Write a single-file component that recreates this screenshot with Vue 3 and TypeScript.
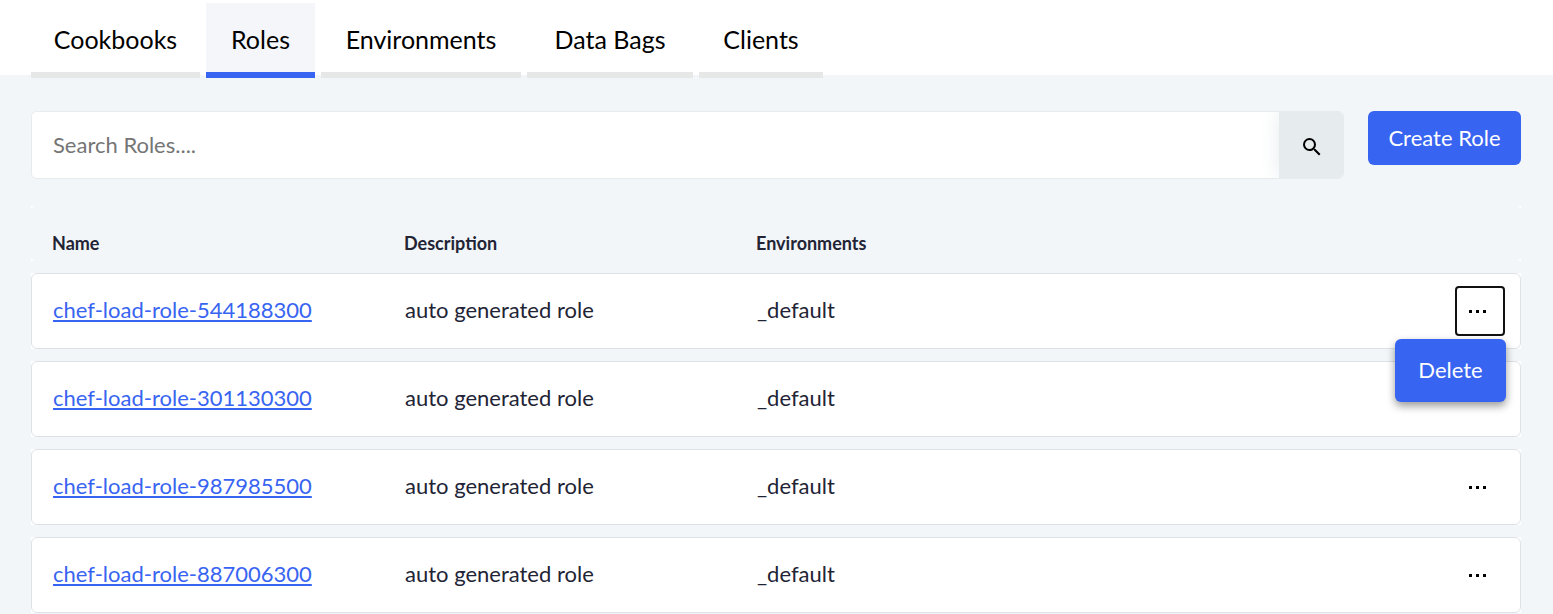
<script setup lang="ts">
import { ref } from 'vue'

interface Role {
  name: string
  description: string
  environments: string
}

const tabs: string[] = ['Cookbooks', 'Roles', 'Environments', 'Data Bags', 'Clients']
const activeTab = ref('Roles')
const search = ref('')
const openMenu = ref<string | null>('chef-load-role-544188300')

const roles: Role[] = ['544188300', '301130300', '987985500', '887006300'].map((id) => ({
  name: `chef-load-role-${id}`,
  description: 'auto generated role',
  environments: '_default',
}))

function toggleMenu(name: string): void {
  openMenu.value = openMenu.value === name ? null : name
}
</script>

<template>
  <div class="page">
    <nav class="tabs" aria-label="Sections">
      <a
        v-for="tab in tabs"
        :key="tab"
        href="#"
        class="tab"
        :class="{ active: tab === activeTab }"
        @click.prevent="activeTab = tab"
      >{{ tab }}</a>
    </nav>

    <main class="content">
      <div class="toolbar">
        <form class="search" role="search" @submit.prevent>
          <input v-model="search" class="search-input" type="text" aria-label="Search roles" placeholder="Search Roles...." />
          <button class="search-button" type="submit" aria-label="Search">
            <svg width="24" height="24" viewBox="0 0 24 24" aria-hidden="true">
              <path d="M15.5 14h-.79l-.28-.27A6.47 6.47 0 0 0 16 9.5 6.5 6.5 0 1 0 9.5 16c1.61 0 3.09-.59 4.23-1.57l.27.28v.79l5 4.99L20.49 19l-4.99-5zm-6 0C7.01 14 5 11.99 5 9.5S7.01 5 9.5 5 14 7.01 14 9.5 11.99 14 9.5 14z" />
            </svg>
          </button>
        </form>
        <button class="primary" type="button">Create Role</button>
      </div>

      <table class="roles">
        <colgroup>
          <col />
          <col />
          <col />
          <col />
          <col class="actions-col" />
        </colgroup>
        <thead>
          <tr>
            <th scope="col">Name</th>
            <th scope="col">Description</th>
            <th scope="col" colspan="2">Environments</th>
            <td></td>
          </tr>
        </thead>
        <tbody>
          <tr v-for="role in roles" :key="role.name">
            <td><a class="role-link" href="#">{{ role.name }}</a></td>
            <td>{{ role.description }}</td>
            <td colspan="2">{{ role.environments }}</td>
            <td class="actions">
              <div class="menu">
                <button
                  class="menu-button"
                  :class="{ open: openMenu === role.name }"
                  type="button"
                  :aria-label="`Actions for ${role.name}`"
                  :aria-expanded="openMenu === role.name"
                  @click="toggleMenu(role.name)"
                >
                  <svg width="18" height="4" viewBox="0 0 18 4" aria-hidden="true">
                    <path d="M0 1h3v3H0zM7 1h3v3H7zM14 1h3v3h-3z" />
                  </svg>
                </button>
                <button v-if="openMenu === role.name" class="menu-item" type="button">Delete</button>
              </div>
            </td>
          </tr>
        </tbody>
      </table>
    </main>
  </div>
</template>

<style>
html {
  background: #f2f6f9;
}

body {
  overflow-x: hidden;
}
</style>

<style scoped>
.page,
.page * {
  box-sizing: border-box;
}

.page {
  color: #222435;
  font-family: Muli, Lato, "Open Sans", sans-serif;
  font-size: 22px;
  line-height: 28px;
}

button,
input {
  font: inherit;
}

.tabs {
  display: grid;
  grid-template-columns: 169px 109px 200px 166px 124px;
  gap: 6px;
  height: 75px;
  padding: 3px 32px 0 31px;
  background: #fff;
}

.tab {
  height: 75px;
  padding: 21px 0 0;
  border-bottom: 6px solid #e6e8e8;
  color: #000;
  font-size: 25px;
  line-height: 30px;
  text-align: center;
  text-decoration: none;
  white-space: nowrap;
}

.tab.active {
  background: #f4f6f9;
  border-bottom-color: #3864f2;
}

.content {
  padding: 36px 32px 0 31px;
}

.toolbar {
  display: flex;
  align-items: flex-start;
  gap: 24px;
}

.search {
  display: flex;
  flex: 1;
  height: 68px;
  overflow: hidden;
  border: 1px solid #e6ebee;
  border-radius: 6px;
  background: #fff;
}

.search-input {
  flex: 1;
  min-width: 0;
  padding: 0 21px;
  border: 0;
  outline: 0;
  background: #fff;
  color: #222435;
}

.search-input::placeholder {
  color: #757575;
  opacity: 1;
}

.search-button {
  display: flex;
  align-items: center;
  justify-content: center;
  width: 64px;
  padding: 3px 0 0 2px;
  border: 0;
  background: #e6ebee;
  box-shadow: 0 0 20px #e6ebee;
}

.primary {
  width: 153px;
  height: 54px;
  padding: 0;
  border: 0;
  border-radius: 6px;
  background: #3864f2;
  color: #fff;
}

.roles {
  width: 100%;
  margin-top: 15px;
  table-layout: fixed;
  border-spacing: 0 12px;
}

.actions-col {
  width: 82px;
}

.roles tr {
  position: relative;
  background: #fff;
}

.roles th,
.roles td {
  padding: 0 0 2px 22px;
  text-align: left;
}

.roles thead th,
.roles thead td {
  height: 55px;
  padding: 18px 0 0 21px;
  background: #f2f6f9;
  font-size: 18px;
  font-weight: 700;
  line-height: 24px;
}

.roles thead th:first-child {
  background:
    radial-gradient(circle at 100% 100%, #f2f6f9 6px, #fff 7px) 0 0 / 6px 6px no-repeat,
    radial-gradient(circle at 100% 0, #f2f6f9 6px, #fff 7px) 0 100% / 6px 6px no-repeat,
    #f2f6f9;
}

.roles thead td:last-child {
  background:
    radial-gradient(circle at 0 100%, #f2f6f9 6px, #fff 7px) 100% 0 / 6px 6px no-repeat,
    radial-gradient(circle at 0 0, #f2f6f9 6px, #fff 7px) 100% 100% / 6px 6px no-repeat,
    #f2f6f9;
}

.roles tbody td {
  height: 76px;
}

/* One rounded outline drawn across the whole row */
.roles tbody td:first-child::before {
  content: "";
  position: absolute;
  inset: 0;
  border: 1px solid #dee2e6;
  border-radius: 6px;
  pointer-events: none;
}

.role-link {
  position: relative;
  color: #3864f2;
  text-decoration: underline;
  text-decoration-thickness: 2px;
  text-underline-offset: 2px;
}

.roles .actions {
  padding: 0 16px 0 0;
}

.menu {
  position: relative;
  width: 50px;
  margin-left: auto;
}

.menu-button {
  display: flex;
  align-items: center;
  justify-content: center;
  width: 50px;
  height: 50px;
  padding: 0 4px 0 0;
  border: 2px solid transparent;
  border-radius: 4px;
  background: transparent;
}

.menu-button.open {
  border-color: #111;
}

.menu-item {
  position: absolute;
  z-index: 1;
  top: 53px;
  right: -1px;
  width: 111px;
  height: 63px;
  padding: 0 0 2px;
  border: 0;
  border-radius: 6px;
  background: #3864f2;
  box-shadow: 0 4px 8px rgba(0, 0, 0, 0.4);
  color: #fff;
}
</style>
